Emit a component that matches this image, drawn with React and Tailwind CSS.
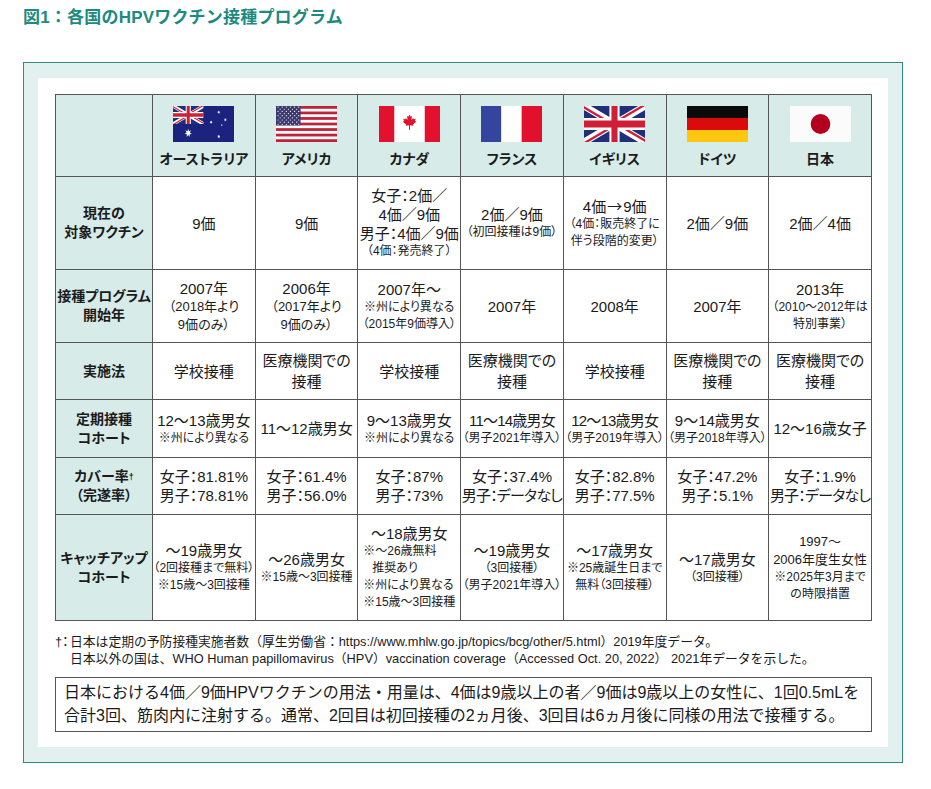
import React from "react";

// 各国の国旗（簡易SVG）
function UnionJack({ id }) {
  return (
    <g clipPath={`url(#${id}s)`}>
      <defs>
        <clipPath id={`${id}s`}>
          <path d="M0,0 v30 h60 v-30 z" />
        </clipPath>
        <clipPath id={`${id}t`}>
          <path d="M30,15 h30 v15 z v15 h-30 z h-30 v-15 z v-15 h30 z" />
        </clipPath>
      </defs>
      <path d="M0,0 v30 h60 v-30 z" fill="#1f2f7a" />
      <path d="M0,0 L60,30 M60,0 L0,30" stroke="#fff" strokeWidth="6" />
      <path d="M0,0 L60,30 M60,0 L0,30" clipPath={`url(#${id}t)`} stroke="#cf1f36" strokeWidth="4" />
      <path d="M30,0 v30 M0,15 h60" stroke="#fff" strokeWidth="10" />
      <path d="M30,0 v30 M0,15 h60" stroke="#cf1f36" strokeWidth="6" />
    </g>
  );
}

function star(cx, cy, R, r, n) {
  const pts = [];
  for (let i = 0; i < n * 2; i++) {
    const a = (Math.PI * i) / n - Math.PI / 2;
    const rad = i % 2 === 0 ? R : r;
    pts.push(`${(cx + rad * Math.cos(a)).toFixed(2)},${(cy + rad * Math.sin(a)).toFixed(2)}`);
  }
  return pts.join(" ");
}

function FlagAU() {
  return (
    <svg width="61" height="36" viewBox="0 0 60 30" preserveAspectRatio="none">
      <rect width="60" height="30" fill="#1b237e" />
      <svg x="0" y="0" width="30" height="15" viewBox="0 0 60 30" preserveAspectRatio="none">
        <UnionJack id="au" />
      </svg>
      <polygon points={star(15, 22.5, 3.6, 1.6, 7)} fill="#fff" />
      <polygon points={star(45, 25.5, 1.6, 0.7, 7)} fill="#fff" />
      <polygon points={star(37.5, 13.5, 1.5, 0.65, 7)} fill="#fff" />
      <polygon points={star(45, 5.2, 1.5, 0.65, 7)} fill="#fff" />
      <polygon points={star(51.5, 11.5, 1.5, 0.65, 7)} fill="#fff" />
      <polygon points={star(48, 16, 0.9, 0.4, 5)} fill="#fff" />
    </svg>
  );
}

function FlagUS() {
  const stripes = [];
  for (let i = 0; i < 13; i += 2) {
    stripes.push(<rect key={i} y={(i * 36) / 13} width="62" height={36 / 13} fill="#c0223a" />);
  }
  const dots = [];
  for (let r = 0; r < 9; r++) {
    const count = r % 2 === 0 ? 6 : 5;
    for (let c = 0; c < count; c++) {
      const x = r % 2 === 0 ? 2.1 + c * 4.2 : 4.2 + c * 4.2;
      dots.push(<circle key={`${r}-${c}`} cx={x} cy={1.1 + r * 2.15} r="0.6" fill="#fff" />);
    }
  }
  return (
    <svg width="61" height="36" viewBox="0 0 62 36" preserveAspectRatio="none">
      <rect width="62" height="36" fill="#fff" />
      {stripes}
      <rect width="25" height={(7 * 36) / 13} fill="#3b3a70" />
      {dots}
    </svg>
  );
}

function FlagCA() {
  return (
    <svg width="61" height="36" viewBox="0 0 62 36" preserveAspectRatio="none">
      <rect width="62" height="36" fill="#fff" />
      <rect width="15.5" height="36" fill="#e2112e" />
      <rect x="46.5" width="15.5" height="36" fill="#e2112e" />
      <g transform="translate(22 7.5) scale(0.9)">
        <path
          d="M10 1 L11.3 3.5 L12.8 2.8 L12.2 7.2 L14.2 5.1 L14.7 6.3 L17 5.8 L16.2 8.4 L17.6 9.1 L13.8 12.3 L14.2 13.6 L10.5 13 L10.6 18 L9.4 18 L9.5 13 L5.8 13.6 L6.2 12.3 L2.4 9.1 L3.8 8.4 L3 5.8 L5.3 6.3 L5.8 5.1 L7.8 7.2 L7.2 2.8 L8.7 3.5 Z"
          fill="#e2112e"
        />
      </g>
    </svg>
  );
}

function FlagFR() {
  return (
    <svg width="61" height="36" viewBox="0 0 60 36" preserveAspectRatio="none">
      <rect width="20" height="36" fill="#33459e" />
      <rect x="20" width="20" height="36" fill="#fff" />
      <rect x="40" width="20" height="36" fill="#e1102d" />
    </svg>
  );
}

function FlagUK() {
  return (
    <svg width="61" height="36" viewBox="0 0 60 30" preserveAspectRatio="none">
      <UnionJack id="uk" />
    </svg>
  );
}

function FlagDE() {
  return (
    <svg width="61" height="36" viewBox="0 0 60 36" preserveAspectRatio="none">
      <rect width="60" height="12" fill="#0a0a0a" />
      <rect y="12" width="60" height="12" fill="#dc0b0b" />
      <rect y="24" width="60" height="12" fill="#fbc80f" />
    </svg>
  );
}

function FlagJP() {
  return (
    <svg width="61" height="36" viewBox="0 0 62 36" preserveAspectRatio="none">
      <rect width="62" height="36" fill="#fbfbfb" />
      <circle cx="31" cy="18" r="10" fill="#b3001f" />
    </svg>
  );
}

const countries = [
  { name: "オーストラリア", Flag: FlagAU },
  { name: "アメリカ", Flag: FlagUS },
  { name: "カナダ", Flag: FlagCA },
  { name: "フランス", Flag: FlagFR },
  { name: "イギリス", Flag: FlagUK },
  { name: "ドイツ", Flag: FlagDE },
  { name: "日本", Flag: FlagJP },
];

const size = {
  m: "text-[15px] leading-[19px]",
  n: "text-[15px] leading-[19px] tracking-[-0.8px]",
  w: "text-[15px] leading-[21px]",
  s: "text-[13px] leading-[18px]",
  x: "text-[12px] leading-[17px]",
};

const L = (t, s = "m") => ({ t, s });

const canadaCatchUp = (
  <div className="flex flex-col items-center">
    <div className={size.m}>〜18歳男女</div>
    <div className="text-left">
      <div className={size.x}>※〜26歳無料</div>
      <div className={`${size.x} pl-[9px]`}>推奨あり</div>
      <div className={size.x}>※州により異なる</div>
      <div className={size.x}>※15歳〜3回接種</div>
    </div>
  </div>
);

const ukVaccine = (
  <div className="flex flex-col items-center">
    <div className={size.m}>
      4価<span className="font-['Noto_Sans_CJK_JP'] px-[1px]">→</span>9価
    </div>
    <div className={size.x}>（4価：販売終了に</div>
    <div className={size.x}>伴う段階的変更）</div>
  </div>
);

const rows = [
  {
    label: ["現在の", "対象ワクチン"],
    h: "h-[93px]",
    cells: [
      [L("9価")],
      [L("9価")],
      [L("女子：2価／"), L("4価／9価"), L("男子：4価／9価"), L("（4価：発売終了）", "x")],
      [L("2価／9価"), L("（初回接種は9価）", "x")],
      ukVaccine,
      [L("2価／9価")],
      [L("2価／4価")],
    ],
  },
  {
    label: ["接種プログラム", "開始年"],
    h: "h-[73px]",
    cells: [
      [L("2007年"), L("（2018年より", "s"), L("9価のみ）", "s")],
      [L("2006年"), L("（2017年より", "s"), L("9価のみ）", "s")],
      [L("2007年〜"), L("※州により異なる", "x"), L("（2015年9価導入）", "x")],
      [L("2007年")],
      [L("2008年")],
      [L("2007年")],
      [L("2013年"), L("（2010〜2012年は", "x"), L("特別事業）", "x")],
    ],
  },
  {
    label: ["実施法"],
    h: "h-[57px]",
    cells: [
      [L("学校接種", "w")],
      [L("医療機関での", "w"), L("接種", "w")],
      [L("学校接種", "w")],
      [L("医療機関での", "w"), L("接種", "w")],
      [L("学校接種", "w")],
      [L("医療機関での", "w"), L("接種", "w")],
      [L("医療機関での", "w"), L("接種", "w")],
    ],
  },
  {
    label: ["定期接種", "コホート"],
    h: "h-[58px]",
    cells: [
      [L("12〜13歳男女"), L("※州により異なる", "x")],
      [L("11〜12歳男女")],
      [L("9〜13歳男女"), L("※州により異なる", "x")],
      [L("11〜14歳男女", "n"), L("（男子2021年導入）", "x")],
      [L("12〜13歳男女", "n"), L("（男子2019年導入）", "x")],
      [L("9〜14歳男女"), L("（男子2018年導入）", "x")],
      [L("12〜16歳女子")],
    ],
  },
  {
    label: [
      <>
        カバー率<sup className="text-[9px] relative -top-[1px]">†</sup>
      </>,
      "（完遂率）",
    ],
    h: "h-[57px]",
    cells: [
      [L("女子：81.81%"), L("男子：78.81%")],
      [L("女子：61.4%"), L("男子：56.0%")],
      [L("女子：87%"), L("男子：73%")],
      [L("女子：37.4%"), L("男子：データなし", "n")],
      [L("女子：82.8%"), L("男子：77.5%")],
      [L("女子：47.2%"), L("男子：5.1%")],
      [L("女子：1.9%"), L("男子：データなし", "n")],
    ],
  },
  {
    label: ["キャッチアップ", "コホート"],
    h: "h-[106px]",
    cells: [
      [L("〜19歳男女"), L("（2回接種まで無料）", "x"), L("※15歳〜3回接種", "x")],
      [L("〜26歳男女"), L("※15歳〜3回接種", "x")],
      canadaCatchUp,
      [L("〜19歳男女"), L("（3回接種）", "x"), L("（男子2021年導入）", "x")],
      [L("〜17歳男女"), L("※25歳誕生日まで", "x"), L("無料（3回接種）", "x")],
      [L("〜17歳男女"), L("（3回接種）", "x")],
      [L("1997〜", "s"), L("2006年度生女性", "s"), L("※2025年3月まで", "x"), L("の時限措置", "x")],
    ],
  },
];

function Cell({ content }) {
  if (!Array.isArray(content)) return content;
  return (
    <div className="flex flex-col items-center">
      {content.map((line, i) => (
        <div key={i} className={`${size[line.s]} whitespace-nowrap`}>
          {line.t}
        </div>
      ))}
    </div>
  );
}

export default function App() {
  return (
    <div className="w-[931px] h-[789px] bg-white text-[#1b1b1b] font-['Liberation_Sans','Noto_Sans_CJK_JP',sans-serif]">
      <h1 className="pt-[8px] pl-[23px] text-[17px] leading-[20px] font-bold tracking-[0.2px] text-[#1d8a7f]">
        図1：各国のHPVワクチン接種プログラム
      </h1>

      <div className="mt-[34px] ml-[23px] w-[880px] h-[701px] border border-[#2f8c83] bg-[#e2f1ef] px-[14px] py-[15px]">
        <div className="h-full bg-white pl-[17px] pt-[16px]">
          <table className="w-[817px] table-fixed border-collapse border border-[#555] [font-feature-settings:'palt']">
            <colgroup>
              <col className="w-[97px]" />
              {countries.map((c) => (
                <col key={c.name} />
              ))}
            </colgroup>
            <tbody>
              <tr className="h-[82px] bg-[#d7ebe9]">
                <td className="border border-[#555]" />
                {countries.map(({ name, Flag }) => (
                  <td key={name} className="border border-[#555] p-0 align-top">
                    <div className="flex flex-col items-center pt-[11px]">
                      <Flag />
                      <div className="mt-[7px] text-[14px] leading-[20px] font-bold whitespace-nowrap">{name}</div>
                    </div>
                  </td>
                ))}
              </tr>
              {rows.map((row, r) => (
                <tr key={r} className={row.h}>
                  <td className="border border-[#555] bg-[#d7ebe9] p-0 text-center">
                    {row.label.map((t, i) => (
                      <div key={i} className="text-[14px] leading-[19px] font-bold whitespace-nowrap">
                        {t}
                      </div>
                    ))}
                  </td>
                  {row.cells.map((c, i) => (
                    <td key={i} className="border border-[#555] p-0 text-center align-middle">
                      <Cell content={c} />
                    </td>
                  ))}
                </tr>
              ))}
            </tbody>
          </table>

          <div className="mt-[12px] text-[12.8px] leading-[17px]">
            <div className="flex">
              <span className="w-[15px] shrink-0 [font-feature-settings:'palt']">†：</span>
              <span>日本は定期の予防接種実施者数（厚生労働省：https://www.mhlw.go.jp/topics/bcg/other/5.html）2019年度データ。</span>
            </div>
            <div className="pl-[15px]">
              日本以外の国は、WHO Human papillomavirus（HPV）vaccination coverage（Accessed Oct. 20, 2022） 2021年データを示した。
            </div>
          </div>

          <div className="mt-[10px] w-[817px] border border-[#555] px-[8px] pt-[3px] pb-[4px] text-[16px] leading-[23px]">
            <div>日本における4価／9価HPVワクチンの用法・用量は、4価は9歳以上の者／9価は9歳以上の女性に、1回0.5mLを</div>
            <div>合計3回、筋肉内に注射する。通常、2回目は初回接種の2ヵ月後、3回目は6ヵ月後に同様の用法で接種する。</div>
          </div>
        </div>
      </div>
    </div>
  );
}
